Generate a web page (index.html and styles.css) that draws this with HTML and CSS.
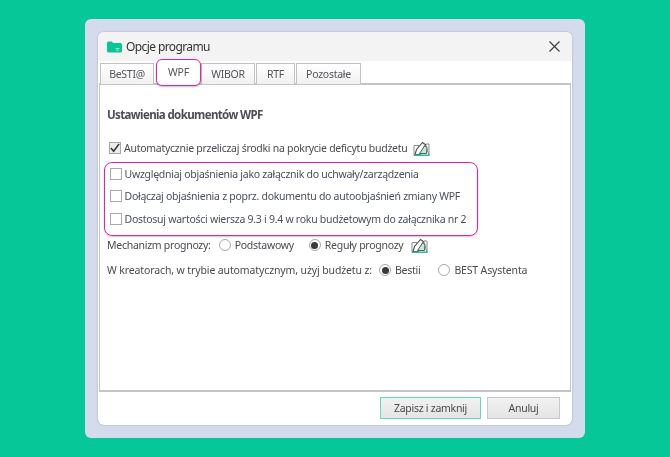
FILE: index.html
```html
<!DOCTYPE html>
<html lang="pl">
<head>
<meta charset="utf-8">
<title>Opcje programu</title>
<link rel="stylesheet" href="styles.css">
</head>
<body>
<div class="panel">
  <div class="dialog">
    <header class="titlebar">
      <svg class="logo" width="15" height="12" viewBox="0 0 15 12"><path d="M0 2a1.500 1.500 0 0 1 1.500-1.500h3.500l1 1.500h7.500a1.500 1.500 0 0 1 1.500 1.500v6.500a1.500 1.500 0 0 1-1.500 1.500h-12a1.500 1.500 0 0 1-1.500-1.500z" fill="#0cc596"/><path d="M8.500 7.500h4M9 9.200h3" stroke="#9be8d2" stroke-width="1"/></svg>
      <span class="title">Opcje programu</span>
      <svg class="close" width="11" height="11" viewBox="0 0 11 11"><path d="M.5.500l10 10M10.500.500l-10 10" stroke="#3c3c3c" stroke-width="1.100" fill="none"/></svg>
    </header>
    <nav class="tabs">
      <div class="tab tab-besti">BeSTI@</div>
      <div class="tab tab-wpf">WPF</div>
      <div class="tab tab-wibor">WIBOR</div>
      <div class="tab tab-rtf">RTF</div>
      <div class="tab tab-poz">Pozostałe</div>
    </nav>
    <main class="content">
      <h1 class="heading">Ustawienia dokumentów WPF</h1>
      <div class="row row-first">
        <span class="check checked"><svg width="11" height="10" viewBox="0 0 11 10"><path d="M1 5l3 3.500 6-8" stroke="#333" stroke-width="1.700" fill="none"/></svg></span>
        <span>Automatycznie przeliczaj środki na pokrycie deficytu budżetu</span>
        <svg class="edit edit-a" width="17" height="15" viewBox="0 0 17 15"><path d="M1 14.500v-10h5M13 5v-2h3v11.500z" fill="none" stroke="#8a8f8c" stroke-width="1"/><path d="M2 13.500l1.500-5 6-7 3 2.200-5.500 9.800z" fill="#fff" stroke="#4c4c4c" stroke-width="1.100"/><path d="M6.500 12.500l5-7.500 2.500 1-.5 6.500z" fill="#bfeadc" stroke="#4c4c4c" stroke-width=".9"/><path d="M1 14.300h15.500" stroke="#2cbd94" stroke-width="1.500"/></svg>
      </div>
      <section class="group">
        <div class="row"><span class="check"></span><span class="blueish">Uwzględniaj objaśnienia jako załącznik do uchwały/zarządzenia</span></div>
        <div class="row"><span class="check"></span><span class="blueish">Dołączaj objaśnienia z poprz. dokumentu do autoobjaśnień zmiany WPF</span></div>
        <div class="row"><span class="check"></span><span class="blueish">Dostosuj wartości wiersza 9.3 i 9.4 w roku budżetowym do załącznika nr 2</span></div>
      </section>
      <div class="row row-mech">
        <span>Mechanizm prognozy:</span>
        <span class="radio r-a"></span><span>Podstawowy</span>
        <span class="radio on r-b"></span><span>Reguły prognozy</span>
        <svg class="edit edit-b" width="17" height="15" viewBox="0 0 17 15"><path d="M1 14.500v-10h5M13 5v-2h3v11.500z" fill="none" stroke="#8a8f8c" stroke-width="1"/><path d="M2 13.500l1.500-5 6-7 3 2.200-5.500 9.800z" fill="#fff" stroke="#4c4c4c" stroke-width="1.100"/><path d="M6.500 12.500l5-7.500 2.500 1-.5 6.500z" fill="#bfeadc" stroke="#4c4c4c" stroke-width=".9"/><path d="M1 14.300h15.500" stroke="#2cbd94" stroke-width="1.500"/></svg>
      </div>
      <div class="row row-kreat">
        <span class="kreat-label">W kreatorach, w trybie automatycznym, użyj budżetu z:</span>
        <span class="radio on r-c"></span><span>Bestii</span>
        <span class="radio r-d"></span><span class="asystent">BEST Asystenta</span>
      </div>
    </main>
    <footer class="footer">
      <button class="btn btn-primary">Zapisz i zamknij</button>
      <button class="btn btn-cancel">Anuluj</button>
    </footer>
  </div>
</div>
</body>
</html>
```
FILE: styles.css
```css
* { box-sizing: border-box; }
html, body { margin: 0; height: 457px; overflow: hidden; }
body {
  background: #06c798;
  font-family: "Noto Sans", "Liberation Sans", sans-serif;
  font-size: 10.5px;
  letter-spacing: -0.27px;
  color: #4a4a50;
  padding: 19px 0 0 85px;
}
.panel {
  width: 500px;
  height: 419px;
  background: #d3dbec;
  border-radius: 6px;
  padding: 13px;
}
.dialog {
  width: 474px;
  height: 393px;
  background: #fff;
  border-radius: 6px;
  box-shadow: 0 0 1.500px #8f8f8f;
  display: flex;
  flex-direction: column;
  overflow: hidden;
  filter: blur(0.35px);
}
.titlebar {
  height: 29px;
  flex: none;
  background: #f3f3f3;
  display: flex;
  align-items: center;
  padding: 0 12px 0 9px;
}
.logo { flex: none; }
.title { margin-left: 4px; font-size: 12px; letter-spacing: -0.6px; color: #333; flex: 1; }
.tabs {
  height: 23px;
  flex: none;
  display: flex;
  align-items: flex-end;
  padding-left: 2px;
  position: relative;
}
.tab {
  height: 21px;
  border: 1.500px solid #c2c2c2;
  border-bottom: 0;
  background: linear-gradient(#fff, #f1f1f1);
  display: flex;
  align-items: center;
  justify-content: center;
  color: #55555c;
  margin-right: 1px;
}
.tab-besti { width: 54px; margin-right: 2px; }
.tab-wpf {
  width: 45px;
  height: 27px;
  margin: 0 0 -2px 0;
  border: 1.500px solid #e61ea8;
  border-radius: 6px;
  background: #fff;
  box-shadow: 0 1px 2px rgba(0,0,0,.25);
  position: relative;
  z-index: 2;
  padding-bottom: 1px;
}
.tab-wibor { width: 54px; }
.tab-rtf { width: 39px; }
.tab-poz { width: 65px; }
.content {
  height: 309px;
  flex: none;
  margin: -1px 1px 0;
  border: 1px solid #c4c4c4;
  border-width: 2px 1px 2px 1px;
  padding: 0 5px 0 6px;
  display: flex;
  flex-direction: column;
}
.heading {
  margin: 21px 0 0 1px;
  height: 18px;
  line-height: 18px;
  font-size: 11.5px;
  letter-spacing: -0.62px;
  font-weight: 700;
  color: #4d4d55;
}
.row { display: flex; align-items: center; height: 24px; white-space: nowrap; }
.row-first { margin-top: 12px; padding-left: 3px; }
.check {
  width: 12px;
  height: 12px;
  border: 1px solid #a9a9a9;
  background: #fff;
  flex: none;
  margin-right: 3px;
  display: flex;
  align-items: center;
  justify-content: center;
}
.checked { background: #ececec; }
.edit { flex: none; }
.edit-a { margin-left: 6px; }
.edit-b { margin-left: 8px; }
.blueish { color: #4a4e5e; }
.group {
  width: 374px;
  height: 74px;
  margin: 2px 0 0 -2px;
  padding: 0 0 5px 4.500px;
  border: 1.500px solid #e61ea8;
  border-radius: 8px;
  box-shadow: 0 1px 2px rgba(0,0,0,.22);
  display: flex;
  flex-direction: column;
  justify-content: center;
}
.row-mech { margin: -3px 0 0 1px; }
.row-kreat { margin: 1px 0 0 1px; }
.kreat-label { letter-spacing: -0.12px; }
.asystent { letter-spacing: -0.15px; }
.radio {
  width: 12px;
  height: 12px;
  border: 1px solid #a9a9a9;
  border-radius: 50%;
  background: #fff;
  flex: none;
  display: flex;
  align-items: center;
  justify-content: center;
}
.radio.on::after {
  content: "";
  width: 7px;
  height: 7px;
  border-radius: 50%;
  background: #3a3a3a;
}
.r-a { margin: 0 4px 0 8px; }
.r-b { margin: 0 4px 0 15px; }
.r-c { margin: 0 4px 0 7px; }
.r-d { margin: 0 4px 0 18px; }
.footer {
  flex: 1;
  display: flex;
  justify-content: flex-end;
  align-items: flex-start;
  padding: 5px 12px 0 0;
  gap: 6px;
}
.btn {
  height: 22px;
  font: inherit;
  letter-spacing: inherit;
  color: #4a4a50;
  border: 1.500px solid #c8c8c8;
  background: linear-gradient(#f2f2f2, #e4e4e4);
  padding: 0;
}
.btn-primary { width: 101px; border-color: #62dcb6; }
.btn-cancel { width: 73px; }
```
